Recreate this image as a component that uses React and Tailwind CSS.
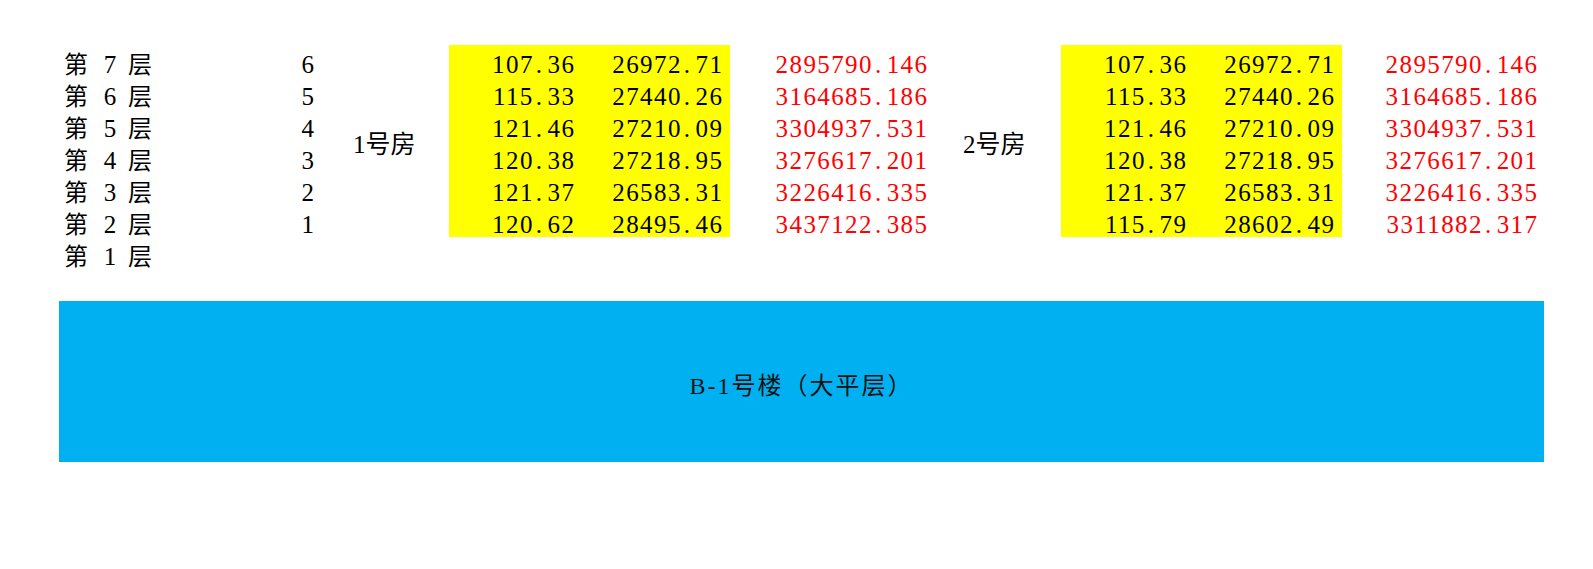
import React from "react";

const floors = [7, 6, 5, 4, 3, 2, 1];
const units = [6, 5, 4, 3, 2, 1];

const house1 = [
  ["107.36", "26972.71", "2895790.146"],
  ["115.33", "27440.26", "3164685.186"],
  ["121.46", "27210.09", "3304937.531"],
  ["120.38", "27218.95", "3276617.201"],
  ["121.37", "26583.31", "3226416.335"],
  ["120.62", "28495.46", "3437122.385"],
];

const house2 = [
  ["107.36", "26972.71", "2895790.146"],
  ["115.33", "27440.26", "3164685.186"],
  ["121.46", "27210.09", "3304937.531"],
  ["120.38", "27218.95", "3276617.201"],
  ["121.37", "26583.31", "3226416.335"],
  ["115.79", "28602.49", "3311882.317"],
];

// SimSun-like numbers: every char has the same advance, period included
const Num = ({ value }) => {
  const [a, b] = value.split(".");
  return (
    <span className="tracking-[1.4px] mr-[-1.4px]">
      {a}
      <span className="inline-block w-[13.8px] text-left pl-[2px]">.</span>
      {b}
    </span>
  );
};

const HouseBlock = ({ label, rows, labelPad, labelWidth, redWidth }) => (
  <>
    <div className={`${labelWidth} ${labelPad} h-[192px] flex items-center pt-2`}>
      <span className="leading-6">
        {label[0]}
        <span className="text-[25px]">{label.slice(1)}</span>
      </span>
    </div>
    <div className="w-[281px] h-[192px] bg-[#ffff00] flex pr-[8px]">
      <div className="w-[125px] flex flex-col text-right">
        {rows.map((r, i) => (
          <div key={i} className="h-8 pt-2 leading-6">
            <Num value={r[0]} />
          </div>
        ))}
      </div>
      <div className="w-[148px] flex flex-col text-right">
        {rows.map((r, i) => (
          <div key={i} className="h-8 pt-2 leading-6">
            <Num value={r[1]} />
          </div>
        ))}
      </div>
    </div>
    <div className={`${redWidth} flex flex-col text-right text-[#ff0000]`}>
      {rows.map((r, i) => (
        <div key={i} className="h-8 pt-2 leading-6">
          <Num value={r[2]} />
        </div>
      ))}
    </div>
  </>
);

export default function App() {
  return (
    <div className="w-[1593px] h-[569px] bg-white text-black font-['Liberation_Serif','Noto_Sans_CJK_SC',serif] text-[25px] overflow-hidden">
      <div className="flex pt-[45px]">
        {/* floor names */}
        <div className="ml-[64px] w-[136px] flex flex-col">
          {floors.map((f) => (
            <div key={f} className="h-8 pt-2 leading-6 flex">
              <span className="w-[24px] text-[24px]">第</span>
              <span className="ml-[15px] w-[14px] text-center">{f}</span>
              <span className="ml-[11px] w-[24px] text-[24px]">层</span>
            </div>
          ))}
        </div>

        {/* unit numbers */}
        <div className="w-[114px] flex flex-col text-right">
          {units.map((u) => (
            <div key={u} className="h-8 pt-2 leading-6">
              {u}
            </div>
          ))}
        </div>

        <HouseBlock
          label="1号房"
          rows={house1}
          labelWidth="w-[135px]"
          labelPad="pl-[39px]"
          redWidth="w-[197px]"
        />
        <HouseBlock
          label="2号房"
          rows={house2}
          labelWidth="w-[134px]"
          labelPad="pl-[36px]"
          redWidth="w-[195px]"
        />
      </div>

      <div className="mt-[32px] ml-[59px] w-[1485px] h-[161px] bg-[#00b0f0] flex items-center justify-center pt-[9px]">
        <span className="text-[24px] tracking-[2px] text-[#111111]">B-1号楼（大平层）</span>
      </div>
    </div>
  );
}
